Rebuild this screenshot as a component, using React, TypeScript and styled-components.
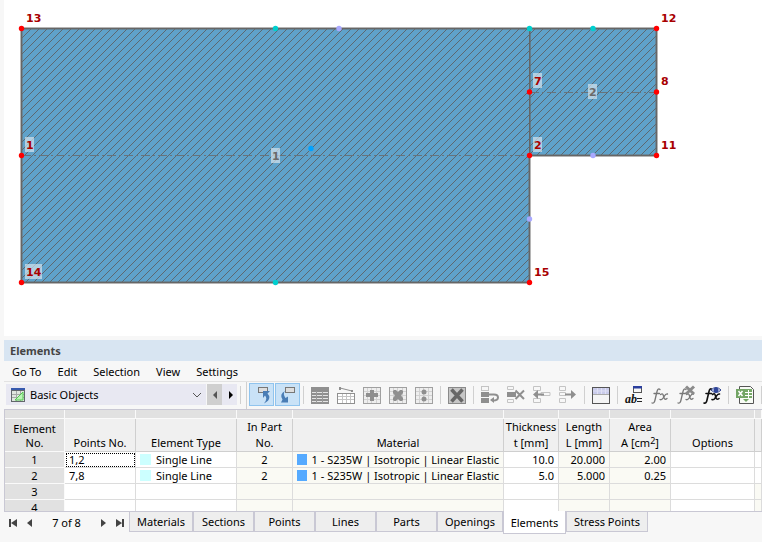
import React from "react";
import styled, { createGlobalStyle, css } from "styled-components";

const color = {
  page: "#f7f7f7",
  title: "#d8e5f2",
  field: "#e8e8f2",
  edge: "#c9c8d4",
  line: "#dcdcdc",
  head: "#f0f0f0",
  strip: "#e1e1e1",
  readOnly: "#fafaf4",
  icon: "#8f8f8f",
  iconSoft: "#c4c4c4",
  blue: "#4a7db5",
};

const GlobalStyle = createGlobalStyle`
  * { box-sizing: border-box; }
  body {
    margin: 0;
    background: ${color.page};
    color: #000;
    font: 11px/16px "Noto Sans", "Open Sans", sans-serif;
    overflow: hidden;
  }
  button, select { font: inherit; color: inherit; border: 0; padding: 0; background: none; }
`;

const Page = styled.main`
  display: flex;
  flex-direction: column;
  padding-left: 4px;
`;

const Viewport = styled.section`
  background: #fff;
  height: 336px;
  overflow: hidden;
  margin-bottom: 4px;
`;

const Drawing = styled.svg`
  display: block;
  width: 100%;
  height: 100%;
`;

const NodeLabel = styled.text<{ $muted?: boolean }>`
  font: bold 11px "DejaVu Sans", sans-serif;
  fill: ${(p) => (p.$muted ? "#6a6a6a" : "#a80000")};
`;

const Title = styled.h1`
  margin: 0;
  padding: 0 6px;
  background: ${color.title};
  color: #444;
  font-size: 11px;
  font-weight: 700;
  line-height: 21px;
`;

const Menu = styled.nav`
  display: flex;
  gap: 16px;
  padding: 3px 8px 1px;
  border-bottom: 1px solid #e2e2e2;
`;

const MenuItem = styled.button`
  line-height: 16px;
`;

const Toolbar = styled.div`
  display: flex;
  height: 27px;
  padding-left: 2px;
  overflow: hidden;
`;

const Combo = styled.label`
  display: flex;
  align-items: center;
  position: relative;
  width: 200px;
  height: 21px;
  margin: 2px 1px 0 0;
  background: ${color.field};
  flex: none;

  svg { position: absolute; pointer-events: none; }
  svg:first-child { left: 5px; }
  svg:last-child { right: 4px; }
`;

const ComboSelect = styled.select`
  appearance: none;
  width: 100%;
  height: 21px;
  padding: 0 24px;
  outline: none;
`;

const StepButton = styled.button<{ $active?: boolean }>`
  display: grid;
  place-items: center;
  flex: none;
  width: 15px;
  height: 21px;
  margin-top: 2px;
  background: ${(p) => (p.$active ? color.field : "#cfcfcf")};
`;

const ShortRule = styled.span`
  flex: none;
  width: 1px;
  height: 18px;
  margin: 4px 3px 0;
  background: #d0d0d0;
`;

const LongRule = styled(ShortRule)`
  height: 27px;
  margin: 0 1px 0 2px;
`;

const Tool = styled.button<{ $on?: boolean }>`
  display: grid;
  place-items: center;
  flex: none;
  width: 26px;
  height: 24px;
  margin-top: 1px;
  ${(p) =>
    p.$on &&
    css`
      width: 25px;
      height: 23px;
      margin-left: 1px;
      background: #c9e2f7;
      border: 1px solid #90c4ee;
    `}
`;

const IconBox = styled.svg`
  display: block;
  width: 20px;
  height: 20px;
`;

const GridFrame = styled.div`
  height: 103px;
  overflow: hidden;
  border: solid ${color.edge};
  border-width: 1px 0 1px 1px;
`;

const Grid = styled.table`
  width: 100%;
  table-layout: fixed;
  border-collapse: separate;
  border-spacing: 0;
`;

const StripCell = styled.th`
  height: 9px;
  padding: 0;
  background: ${color.strip};
  border-right: 1px solid #fafafa;
  border-bottom: 1px solid #fafafa;
`;

const HeadCell = styled.th<{ $corner?: boolean }>`
  height: 33px;
  padding: 0;
  vertical-align: bottom;
  font-weight: 400;
  white-space: nowrap;
  background: ${color.head};
  border-right: 1px solid #cfcfcf;
  border-bottom: 1px solid #cfcfcf;
  ${(p) =>
    p.$corner &&
    css`
      line-height: 14px;
      padding-bottom: 1px;
      background: ${color.strip};
      border-color: #fafafa;
    `}

  sup { font-size: 9px; line-height: 0; vertical-align: 3px; }
`;

const RowHead = styled.th`
  height: 16px;
  padding: 0;
  font-weight: 400;
  line-height: 15px;
  background: ${color.strip};
  border-right: 1px solid #fafafa;
  border-bottom: 1px solid #fafafa;
`;

const Cell = styled.td<{ $locked?: boolean; $align?: string; $focus?: boolean }>`
  height: 16px;
  padding: 0 4px;
  line-height: 15px;
  white-space: nowrap;
  text-align: ${(p) => p.$align ?? "left"};
  background: ${(p) => (p.$locked ? color.readOnly : "#fff")};
  border-right: 1px solid ${color.line};
  border-bottom: 1px solid ${color.line};
  ${(p) => p.$focus && css`outline: 1px dotted #000; outline-offset: -2px;`}
`;

const Swatched = styled.span`
  display: flex;
  align-items: center;
  gap: 5px;
`;

const Swatch = styled.i<{ $tone: string }>`
  width: 11px;
  height: 11px;
  background: ${(p) => p.$tone};
`;

const Footer = styled.footer`
  display: flex;
  align-items: flex-start;
`;

const Pager = styled.div`
  display: flex;
  align-items: center;
  justify-content: space-between;
  width: 125px;
  height: 21px;
  padding: 0 4px;
`;

const PagerButton = styled.button`
  display: grid;
  place-items: center;
  width: 10px;
  height: 16px;
`;

const PageCount = styled.span`
  margin: 0 10px;
  white-space: nowrap;
`;

const Tabs = styled.div`
  display: flex;
  align-items: flex-start;
`;

const Tab = styled.button<{ $wide: number; $current?: boolean }>`
  width: ${(p) => p.$wide}px;
  height: 20px;
  background: ${(p) => (p.$current ? "#fff" : "#eeeeee")};
  border: 1px solid ${color.edge};
  border-top: 0;
  white-space: nowrap;
  ${(p) =>
    p.$current &&
    css`
      position: relative;
      height: 23px;
      margin-top: -1px;
      padding-top: 2px;
    `}
`;

const Icon = ({ children }: { children: React.ReactNode }) => (
  <IconBox viewBox="0 0 20 20" fill="none" aria-hidden="true">
    {children}
  </IconBox>
);

const SheetLines = () => (
  <>
    <rect x="1.5" y="2.5" width="17" height="16" fill="#eee" stroke="#a0a0a0" />
    <path d="M2 6.5h16M2 10.5h16M2 14.5h16M5.5 3v15M9.5 3v15M14.5 3v15" stroke="#d2d2d2" />
  </>
);

const StackBlocks = () => (
  <>
    <rect x="1.5" y="1.5" width="7" height="4" stroke={color.iconSoft} />
    <path d="M1 7h8v5H1zM1 13h8v5H1z" fill={color.icon} />
  </>
);

const Script = ({ soft }: { soft?: boolean }) => (
  <g stroke={soft ? "#777" : "#111"} strokeLinecap="round">
    <path d="M10 4.500C8.500 3 7.500 4.500 7 6.500L5 15C4.500 17.500 3.500 18.500 2 18M4 8.500h5.500" strokeWidth={soft ? 1.3 : 1.6} />
    <path d="M10.500 9.500C12.500 8 13 9 13.500 11S14.500 15.500 17 13.500M17.500 9C15.500 8.500 14.500 11 13.500 12.500S11.500 15.500 10 14.500" strokeWidth={soft ? 1.3 : 1.6} />
  </g>
);

const icons: Record<string, React.ReactNode> = {
  pickUp: (
    <>
      <rect x="6.500" y="2.500" width="9" height="5" fill="#ddd" stroke="#777" />
      <path d="M11 6h7l-2.500 2.500q5 5.500-3.500 10 4-5 1-8L11 13z" fill={color.blue} />
    </>
  ),
  dropDown: (
    <>
      <rect x="7.500" y="2.500" width="9" height="5" fill="#ddd" stroke="#777" />
      <path d="M7 6q-6 3-2.500 8.500L3 17.500h7v-6l-2.500 1.500Q4.500 9 7 6z" fill={color.blue} />
    </>
  ),
  table: (
    <>
      <rect x="1" y="2" width="18" height="17" fill="#8f8f8f" />
      <path d="M2 7.500h16M2 10.500h16M2 13.500h16M2 16.500h16" stroke="#e4e4e4" />
      <path d="M6.500 6v12M12.500 6v12" stroke="#999" />
    </>
  ),
  measure: (
    <>
      <path d="M4 3 16 6" stroke={color.icon} />
      <path d="M3 2h2v3H3zM15 5h2v2h-2z" fill={color.icon} />
      <rect x="1.500" y="8.500" width="17" height="10" fill="#fff" stroke={color.icon} />
      <path d="M2 11.500h16M2 14.500h16M6.500 9v9M10.500 9v9M14.500 9v9" stroke={color.iconSoft} />
    </>
  ),
  plus: (
    <>
      <SheetLines />
      <path d="M8 5h4v3h4v4h-4v4H8v-4H4V8h4z" fill={color.icon} />
    </>
  ),
  cross: (
    <>
      <SheetLines />
      <path d="M6 5h2l2 2 2-2h2l1 1v2l-2 2.500 2 2.500v2l-1 1h-2l-2-2-2 2H6l-1-1v-2l2-2.500L5 8V6z" fill={color.icon} />
    </>
  ),
  dots: (
    <>
      <SheetLines />
      <circle cx="10" cy="7" r="2.500" fill={color.icon} />
      <circle cx="10" cy="14" r="2.500" fill={color.icon} />
    </>
  ),
  clear: (
    <>
      <rect x="1.500" y="2.500" width="17" height="16" fill="#c6c6c6" stroke="#8a8a8a" />
      <path d="M4.500 4.500 15.500 16.500M15.500 4.500 4.500 16.500" stroke="#666" strokeWidth="3.500" />
    </>
  ),
  rowReturn: (
    <>
      <StackBlocks />
      <path d="M9 9.500h5q4 0 4 3t-5 3" stroke={color.icon} strokeWidth="2" />
      <path d="M14 12v6l-4-3z" fill={color.icon} />
    </>
  ),
  rowDelete: (
    <>
      <path d="M1.500 1.500h6v3h-6zM1.500 14.500h6v3h-6z" stroke={color.iconSoft} />
      <path d="M1 7h9v5H1z" fill={color.icon} />
      <path d="M9.500 5.500 18 14M18 5.500 9.500 14" stroke={color.icon} strokeWidth="2" />
    </>
  ),
  rowLeft: (
    <>
      <path d="M1.500 1.500h7v4h-7zM1.500 13.500h7v4h-7zM9 7.500h9v3H9z" stroke={color.iconSoft} />
      <path d="M3 9.500h9" stroke={color.icon} strokeWidth="2" />
      <path d="M1 9.500 6 5v9z" fill={color.icon} />
    </>
  ),
  rowRight: (
    <>
      <path d="M1.500 1.500h6v4h-6zM1.500 7.500h6v3h-6zM1.500 13.500h6v4h-6z" stroke={color.iconSoft} />
      <path d="M7 9.500h8" stroke={color.icon} strokeWidth="2" />
      <path d="M18 9.500 13 5v9z" fill={color.icon} />
    </>
  ),
  panel: (
    <>
      <rect x="1.500" y="2.500" width="17" height="16" fill="#f4f4f4" stroke="#555" />
      <path d="M2 3h16v6H2z" fill="#c9cbea" />
      <path d="M2 6h16M6.500 3v6M10.500 3v6M14.500 3v6" stroke="#dfe0f4" />
      <path d="M2 9.500h16" stroke="#aaa" />
    </>
  ),
  label: (
    <>
      <rect x="9.500" y="1.500" width="8" height="6" fill="#f6f6f6" stroke="#555" />
      <path d="M9 1h9v2.500H9z" fill="#2b3f9e" />
      <text x="1" y="18" fill="#111" fontFamily="Liberation Serif, serif" fontSize="12" fontStyle="italic" fontWeight="700">ab</text>
      <path d="M13 13.500h5M13 16.500h5" stroke="#222" />
    </>
  ),
  fx: <Script soft />,
  fxDelete: (
    <>
      <Script soft />
      <path d="M10 1.500 18 9M18 1.500 10 9" stroke="#8b8b8b" strokeWidth="3" />
    </>
  ),
  fxView: (
    <>
      <Script />
      <path d="M9 5Q14 0 19 5 14 10 9 5z" fill="#e6ebfa" stroke="#273b8c" />
      <circle cx="14" cy="5" r="2.500" fill="#2e4599" />
    </>
  ),
  excel: (
    <>
      <path d="M4.500 1.500h11l3 3v14h-14z" fill="#f8fbf6" stroke="#555" />
      <path d="M10 4h7v9h-7z" fill="#76a867" />
      <path d="M10 7.500h7M10 10.500h7M13.500 5v8" stroke="#fff" />
      <path d="M1 4h9v9H1z" fill="#73a565" />
      <path d="m3.500 6 4 5M7.500 6l-4 5" stroke="#fff" strokeWidth="1.500" />
      <path d="M8 14h6l-3 3z" fill="#73a565" />
    </>
  ),
};

const toolGroups: { name: string; label: string; on?: boolean }[][] = [
  [
    { name: "pickUp", label: "Select in graphic", on: true },
    { name: "dropDown", label: "Show in table", on: true },
  ],
  [
    { name: "table", label: "Table" },
    { name: "measure", label: "Dimensions" },
    { name: "plus", label: "Add" },
    { name: "cross", label: "Remove" },
    { name: "dots", label: "Split" },
  ],
  [{ name: "clear", label: "Clear" }],
  [
    { name: "rowReturn", label: "Move row" },
    { name: "rowDelete", label: "Delete row" },
    { name: "rowLeft", label: "Insert row" },
    { name: "rowRight", label: "Extract row" },
  ],
  [{ name: "panel", label: "Panel" }],
  [
    { name: "label", label: "Parameters" },
    { name: "fx", label: "Formula" },
    { name: "fxDelete", label: "Delete formula" },
    { name: "fxView", label: "View formula" },
  ],
  [{ name: "excel", label: "Export to spreadsheet" }],
  [],
];

const red = "#ff0000";
const teal = "#00cfcf";
const lilac = "#a9a9ff";

const dots: [number, number, string][] = [
  [17.5, 28.5, red], [17.5, 155.5, red], [17.5, 282.5, red],
  [525.5, 92, red], [525.5, 155.5, red], [525.5, 282.5, red],
  [652.5, 28.5, red], [652.5, 92, red], [652.5, 155.5, red],
  [271.5, 28.5, teal], [525.5, 28.5, teal], [589, 28.5, teal], [271.5, 282.5, teal],
  [335, 28.5, lilac], [589, 155.5, lilac], [525.5, 219, lilac],
  [307, 148.5, "#00a2ff"],
];

const labels: { text: string; x: number; y: number; box?: boolean; muted?: boolean }[] = [
  { text: "13", x: 22, y: 22 },
  { text: "1", x: 22, y: 149, box: true },
  { text: "14", x: 22, y: 276, box: true },
  { text: "7", x: 530, y: 85, box: true },
  { text: "2", x: 530, y: 149, box: true },
  { text: "15", x: 530, y: 276 },
  { text: "12", x: 657, y: 22 },
  { text: "8", x: 657, y: 85 },
  { text: "11", x: 657, y: 149 },
  { text: "1", x: 268, y: 160, box: true, muted: true },
  { text: "2", x: 585, y: 96, box: true, muted: true },
];

const shape = "M17.5 28.5H652.5V155.5H525.5V282.5H17.5Z";
const hatchSteps = [0, 1, 2, 3, 4, 5, 6, 7];

const SectionDrawing = () => (
  <Drawing role="img" aria-label="Section geometry">
    <defs>
      <pattern id="hatch" width="8" height="8" patternUnits="userSpaceOnUse">
        {hatchSteps.map((s) => (
          <rect key={s} x={7 - s} y={s} width="1" height="1" fill="#5d6870" />
        ))}
      </pattern>
    </defs>
    <path d={shape} fill="#5fa2ca" />
    <path d={shape} fill="url(#hatch)" />
    <g fill="none" shapeRendering="crispEdges">
      <path d={shape} stroke="#6b6b6b" strokeOpacity="0.5" strokeWidth="3" />
      <path d={`${shape}M525.5 28.5V155.5`} stroke="#666" strokeWidth="1" />
      <path d="M526.500 30V154" stroke="#666" strokeOpacity="0.6" />
      <path d="M18 155.500H525M526 92.500H652" stroke="#66737c" strokeDasharray="9 3 2 3" />
    </g>
    {labels.map((l) => (
      <g key={`${l.x}-${l.y}`}>
        {l.box && (
          <rect x={l.x - 1} y={l.y - 12} width={l.text.length > 1 ? 17 : 9} height="15" fill="#dfe9f0" fillOpacity="0.65" />
        )}
        <NodeLabel x={l.x} y={l.y} $muted={l.muted}>
          {l.text}
        </NodeLabel>
      </g>
    ))}
    {dots.map(([x, y, fill]) => (
      <circle key={`${x}-${y}`} cx={x} cy={y} r="2.700" fill={fill} />
    ))}
  </Drawing>
);

const columns = [60, 71, 101, 56, 211, 55, 51, 61, 84];
const rows = [
  { no: 1, points: "1,2", thickness: "10.0", length: "20.000", area: "2.00" },
  { no: 2, points: "7,8", thickness: "5.0", length: "5.000", area: "0.25" },
  { no: 3 },
  { no: 4 },
];

const ElementsTable = () => (
  <GridFrame>
    <Grid>
      <colgroup>
        {columns.map((w, i) => (
          <col key={i} width={w} />
        ))}
        <col />
      </colgroup>
      <thead>
        <tr>
          {[...columns, 0].map((_, i) => (
            <StripCell key={i} />
          ))}
        </tr>
        <tr>
          <HeadCell $corner>Element<br />No.</HeadCell>
          <HeadCell>Points No.</HeadCell>
          <HeadCell>Element Type</HeadCell>
          <HeadCell>In Part<br />No.</HeadCell>
          <HeadCell>Material</HeadCell>
          <HeadCell>Thickness<br />t [mm]</HeadCell>
          <HeadCell>Length<br />L [mm]</HeadCell>
          <HeadCell>Area<br />A [cm<sup>2</sup>]</HeadCell>
          <HeadCell>Options</HeadCell>
          <HeadCell />
        </tr>
      </thead>
      <tbody>
        {rows.map((r) => (
          <tr key={r.no}>
            <RowHead scope="row">{r.no}</RowHead>
            <Cell $focus={r.no === 1}>{r.points}</Cell>
            <Cell>
              {r.points && <Swatched><Swatch $tone="#ccffff" />Single Line</Swatched>}
            </Cell>
            <Cell $locked $align="center">{r.points && "2"}</Cell>
            <Cell $locked>
              {r.points && <Swatched><Swatch $tone="#55aaff" />1 - S235W | Isotropic | Linear Elastic</Swatched>}
            </Cell>
            <Cell $align="right">{r.thickness}</Cell>
            <Cell $locked $align="right">{r.length}</Cell>
            <Cell $locked $align="right">{r.area}</Cell>
            <Cell />
            <Cell $locked={!r.points} />
          </tr>
        ))}
      </tbody>
    </Grid>
  </GridFrame>
);

const tabs: [string, number][] = [
  ["Materials", 64], ["Sections", 61], ["Points", 61], ["Lines", 61],
  ["Parts", 61], ["Openings", 66], ["Elements", 63], ["Stress Points", 82],
];

const Arrow = ({ d, fill = "#444" }: { d: string; fill?: string }) => (
  <svg width="8" height="8" viewBox="0 0 8 8" aria-hidden="true">
    <path d={d} fill={fill} />
  </svg>
);

export default function App() {
  return (
    <>
      <GlobalStyle />
      <Page>
        <Viewport>
          <SectionDrawing />
        </Viewport>
        <Title>Elements</Title>
        <Menu>
          {["Go To", "Edit", "Selection", "View", "Settings"].map((m) => (
            <MenuItem key={m}>{m}</MenuItem>
          ))}
        </Menu>
        <Toolbar>
          <Combo>
            <svg width="14" height="14" viewBox="0 0 14 14" aria-hidden="true">
              <path d="M0 0h14v14H0z" fill="#62676c" />
              <path d="M1 3h12v10H1z" fill="#dfe6df" />
              <path d="M0 0h14v2H0z" fill="#3659ad" />
              <path d="M1 6.500h12M1 9.500h12M5.500 3v10M9.500 3v10" stroke="#a3a8a5" />
              <path d="M4 12 12 4v8z" fill="#b9f5b5" stroke="#55c752" />
            </svg>
            <ComboSelect aria-label="Table category" defaultValue="Basic Objects">
              <option>Basic Objects</option>
            </ComboSelect>
            <svg width="10" height="6" viewBox="0 0 10 6" aria-hidden="true">
              <path d="m1 1 4 4 4-4" fill="none" stroke="#555" />
            </svg>
          </Combo>
          <StepButton aria-label="Previous category"><Arrow d="M6 0v8L2 4z" fill="#555" /></StepButton>
          <StepButton $active aria-label="Next category"><Arrow d="M3 0v8l4-4z" fill="#000" /></StepButton>
          <ShortRule />
          <LongRule />
          {toolGroups.map((group, i) => (
            <React.Fragment key={i}>
              {i > 0 && <ShortRule />}
              {group.map((t) => (
                <Tool key={t.name} $on={t.on} aria-label={t.label}>
                  <Icon>{icons[t.name]}</Icon>
                </Tool>
              ))}
            </React.Fragment>
          ))}
        </Toolbar>
        <ElementsTable />
        <Footer>
          <Pager>
            <PagerButton aria-label="First table"><Arrow d="M0 0h2v8H0zM8 0v8L2 4z" /></PagerButton>
            <PagerButton aria-label="Previous table"><Arrow d="M6 0v8L1 4z" /></PagerButton>
            <PageCount>7 of 8</PageCount>
            <PagerButton aria-label="Next table"><Arrow d="M2 0v8l5-4z" /></PagerButton>
            <PagerButton aria-label="Last table"><Arrow d="M6 0h2v8H6zM0 0v8l6-4z" /></PagerButton>
          </Pager>
          <Tabs role="tablist">
            {tabs.map(([name, wide]) => (
              <Tab key={name} role="tab" aria-selected={name === "Elements"} $wide={wide} $current={name === "Elements"}>
                {name}
              </Tab>
            ))}
          </Tabs>
        </Footer>
      </Page>
    </>
  );
}
